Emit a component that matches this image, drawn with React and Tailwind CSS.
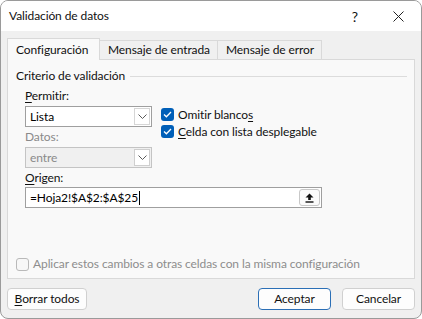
import React from "react";

const font = "font-['Lato',sans-serif]";

function Chevron() {
  return (
    <svg width="9" height="5" viewBox="0 0 9 5" fill="none">
      <path d="M0.5 0.5 L4.5 4.5 L8.5 0.5" stroke="#5a5a5a" strokeWidth="1" />
    </svg>
  );
}

function Check() {
  return (
    <svg width="9" height="7" viewBox="0 0 9 7" fill="none">
      <path d="M1 3.5 L3.4 5.8 L8 1" stroke="white" strokeWidth="1.3" />
    </svg>
  );
}

function Select({ value, disabled }) {
  return (
    <div
      className={`flex h-[21px] w-[127px] items-stretch border ${
        disabled ? "border-[#c4c4c4] bg-[#f0f0f0] text-[#8a8a8a]" : "border-[#9f9f9f] bg-white text-black"
      }`}
    >
      <div className="flex flex-1 items-center pl-[4px] leading-none">{value}</div>
      <div
        className={`m-[1px] flex w-[16px] items-center justify-center border ${
          disabled ? "border-[#cfcfcf] bg-white" : "border-[#d6d6d6] bg-white"
        }`}
      >
        <Chevron />
      </div>
    </div>
  );
}

function CheckBox({ children }) {
  return (
    <div className="flex h-[17px] items-center">
      <div className="flex h-[13px] w-[13px] items-center justify-center rounded-[3px] bg-[#005fb8]">
        <Check />
      </div>
      <span className="ml-[4px]">{children}</span>
    </div>
  );
}

export default function App() {
  return (
    <div
      className={`${font} flex h-[319px] w-[422px] flex-col overflow-hidden whitespace-nowrap rounded-[8px] border border-[#9a9a9a] bg-[#f0f0f0] text-[12px] tracking-[-0.1px] text-[#111]`}
    >
      {/* Title bar */}
      <div className="flex h-[30px] shrink-0 items-center bg-white pl-[8px]">
        <span className="flex-1">Validación de datos</span>
        <span className="mr-[35px] text-[14px]">?</span>
        <svg className="mr-[17px]" width="11" height="11" viewBox="0 0 11 11">
          <path d="M0.5 0.5 L10.5 10.5 M10.5 0.5 L0.5 10.5" stroke="#222" strokeWidth="1" />
        </svg>
      </div>

      <div className="flex flex-1 flex-col px-[6px]">
        {/* Tabs */}
        <div className="mt-[7px] flex items-end">
          <div className="relative z-10 -mb-[1px] flex h-[22px] w-[93px] items-center border border-b-0 border-[#d9d9d9] bg-[#f9f9f9] pl-[8px]">
            Configuración
          </div>
          <div className="flex h-[19px] w-[118px] items-center border border-l-0 border-b-0 border-[#d9d9d9] bg-[#f0f0f0] pl-[8px]">
            Mensaje de entrada
          </div>
          <div className="flex h-[19px] w-[104px] items-center border border-l-0 border-b-0 border-[#d9d9d9] bg-[#f0f0f0] pl-[8px]">
            Mensaje de error
          </div>
        </div>

        {/* Panel */}
        <div className="flex h-[220px] flex-col border border-[#d9d9d9] bg-[#f9f9f9] pl-[8px]">
          <div className="mt-[8px] flex h-[16px] items-center">
            <span>Criterio de validación</span>
            <div className="ml-[5px] mr-[7px] h-px flex-1 bg-[#dcdcdc]" />
          </div>

          <div className="ml-[9px] flex">
            <div className="flex flex-col">
              <div className="mt-[4px] flex h-[16px] items-center">
                <span>
                  <u className="underline-offset-2">P</u>ermitir:
                </span>
              </div>
              <div className="mt-[2px]">
                <Select value="Lista" />
              </div>
              <div className="mt-[2px] flex h-[16px] items-center text-[#8a8a8a]">Datos:</div>
              <div className="mt-[2px]">
                <Select value="entre" disabled />
              </div>
            </div>
            <div className="ml-[9px] mt-[22px] flex flex-col">
              <CheckBox>
                Omitir blanco<u className="underline-offset-2">s</u>
              </CheckBox>
              <CheckBox>
                <u className="underline-offset-2">C</u>elda con lista desplegable
              </CheckBox>
            </div>
          </div>

          <div className="ml-[9px] mt-[2px] flex h-[16px] items-center">
            <span>
              <u className="underline-offset-2">O</u>rigen:
            </span>
          </div>
          <div className="ml-[9px] mt-[1px] flex h-[21px] w-[297px] items-center border border-[#9f9f9f] bg-white">
            <span className="ml-[4px] text-black">=Hoja2!$A$2:$A$25</span>
            <div className="ml-px h-[14px] w-px bg-black" />
            <div className="ml-auto mr-px flex h-[17px] w-[21px] items-center justify-center rounded-[3px] border border-[#c8c8c8] bg-[#fbfbfb]">
              <svg width="9" height="10" viewBox="0 0 9 10">
                <path d="M4.5 0.5 L8.5 4.5 L5.8 4.5 L5.8 7 L3.2 7 L3.2 4.5 L0.5 4.5 Z" fill="#111" />
                <rect x="0.5" y="8.3" width="8" height="1.4" fill="#111" />
              </svg>
            </div>
          </div>

          <div className="mt-[48px] flex h-[16px] items-center text-[#8d8d8d]">
            <div className="h-[13px] w-[13px] rounded-[3px] border border-[#b9b9b9] bg-[#f7f7f7]" />
            <span className="ml-[4px]">Aplicar estos cambios a otras celdas con la misma configuración</span>
          </div>
        </div>

        {/* Buttons */}
        <div className="mt-[9px] flex">
          <button className="flex h-[22px] w-[80px] items-center justify-center rounded-[4px] border border-[#d0d0d0] bg-[#fdfdfd]">
            <span>
              <u className="underline-offset-2">B</u>orrar todos
            </span>
          </button>
          <button className="ml-auto flex h-[22px] w-[73px] items-center justify-center rounded-[4px] border border-[#2b6fb6] bg-[#fdfdfd]">
            Aceptar
          </button>
          <button className="ml-[11px] flex h-[22px] w-[73px] items-center justify-center rounded-[4px] border border-[#d0d0d0] bg-[#fdfdfd]">
            Cancelar
          </button>
        </div>
      </div>
    </div>
  );
}
